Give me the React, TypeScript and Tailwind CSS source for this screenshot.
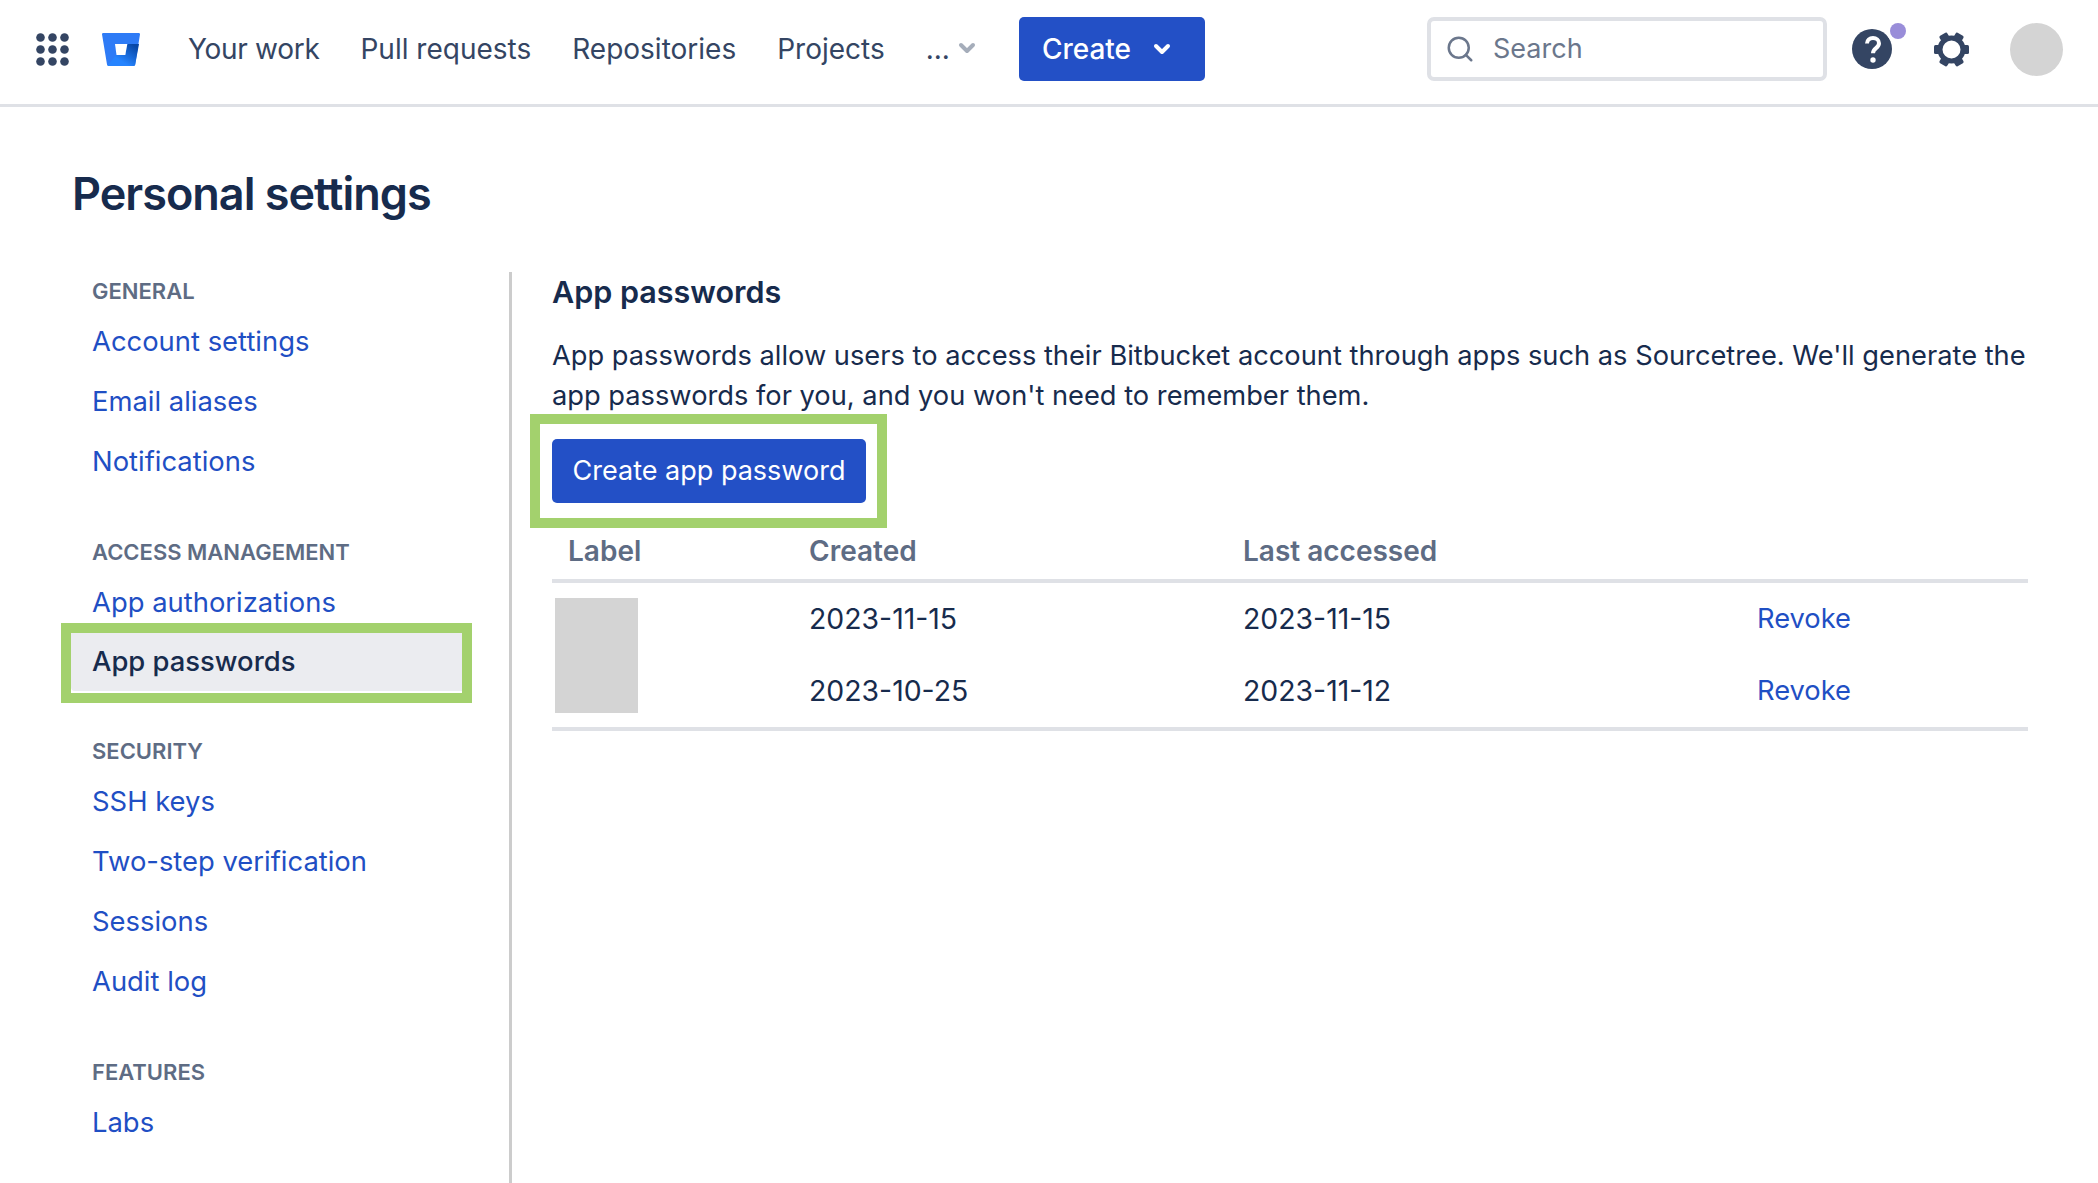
import React from "react";
import { ChevronDown, Search } from "lucide-react";

const sections = [
  { title: "GENERAL", links: ["Account settings", "Email aliases", "Notifications"] },
  { title: "ACCESS MANAGEMENT", links: ["App authorizations", "App passwords"] },
  { title: "SECURITY", links: ["SSH keys", "Two-step verification", "Sessions", "Audit log"] },
  { title: "FEATURES", links: ["Labs"] },
];

const GridIcon = () => (
  <svg width="33" height="33" viewBox="0 0 33 33" fill="#344563">
    {[4.5, 16.5, 28.5].map((y) => [4.5, 16.5, 28.5].map((x) => <circle key={`${x}-${y}`} cx={x} cy={y} r="4.300" />))}
  </svg>
);

const Logo = () => (
  <svg width="38" height="33" viewBox="0 0 38 33">
    <defs>
      <linearGradient id="bb" x1="1" y1="0.2" x2="0.45" y2="0.8">
        <stop offset="0" stopColor="#0747a6" />
        <stop offset="1" stopColor="#2684ff" />
      </linearGradient>
    </defs>
    <path d="M1.2 0h35.6c.8 0 1.3.6 1.2 1.3L33.200 31.600c-.1.8-.7 1.400-1.500 1.400H6.600c-.8 0-1.500-.6-1.600-1.400L0 1.300C-.1.6.4 0 1.200 0z" fill="#2e7bf6" />
    <path d="M37 11H25.300l-2 11h-8.800L5.500 32.500c.3.300.6.500 1.100.5h25.100c.8 0 1.400-.6 1.500-1.400z" fill="url(#bb)" />
    <path d="M13 11h12.300l-2 11h-8.800z" fill="#fff" />
  </svg>
);

const HelpIcon = () => (
  <svg width="58" height="58" viewBox="0 0 58 58">
    <circle cx="22" cy="29" r="20" fill="#344563" />
    <circle cx="48" cy="11" r="11.500" fill="#fff" />
    <circle cx="48" cy="11" r="8" fill="#998dd9" />
    <path d="M17 23.500c0-3.400 2.700-5.500 6-5.500s6 2.100 6 5.200c0 5-6 4.800-6 10" fill="none" stroke="#fff" strokeWidth="4" />
    <circle cx="23" cy="40" r="2.700" fill="#fff" />
  </svg>
);

const GearIcon = () => (
  <svg width="35" height="35" viewBox="0 0 35 35">
    <circle cx="17.500" cy="17.500" r="11.500" fill="none" stroke="#344563" strokeWidth="5" />
    {[0, 60, 120, 180, 240, 300].map((a) => (
      <rect key={a} x="13" y="0" width="9" height="7" rx="1.500" fill="#344563" transform={`rotate(${a + 30} 17.500 17.500)`} />
    ))}
  </svg>
);

const App = () => {
  return (
    <div className="h-[1183px] overflow-hidden bg-white font-['Inter',sans-serif] text-[27.25px] text-[#172b4d]">
      <header className="flex h-[107px] items-center border-b-[3px] border-[#dfe1e6] pb-[6px] pl-9 pr-[35px]">
        <GridIcon />
        <div className="ml-[33px] flex">
          <Logo />
        </div>
        <nav className="ml-[48px] flex items-center gap-[41px] text-[28px] text-[#344563]">
          <span className="tracking-[-0.3px]">Your work</span>
          <span>Pull requests</span>
          <span>Repositories</span>
          <span>Projects</span>
          <span className="flex items-center gap-[5px]">
            ...
            <ChevronDown size={24} strokeWidth={4} className="-mt-[2px] text-[#a5adba]" />
          </span>
        </nav>
        <button className="ml-[40px] flex h-[64px] w-[186px] items-center gap-[19px] rounded-[5px] bg-[#2350c6] pl-[23px] text-[28px] font-medium text-white">
          Create
          <ChevronDown size={24} strokeWidth={4} />
        </button>
        <div className="ml-auto flex h-[64px] w-[400px] items-center gap-[18px] rounded-[7px] border-[4px] border-[#dfe1e6] pl-[14px] text-[27px] text-[#6b778c]">
          <Search size={30} strokeWidth={2} />
          Search
        </div>
        <div className="ml-[23px] flex">
          <HelpIcon />
        </div>
        <div className="ml-[26px] flex">
          <GearIcon />
        </div>
        <div className="ml-[41px] h-[53px] w-[53px] rounded-full bg-[#d4d4d4]" />
      </header>

      <main className="pl-[72px] pr-[70px]">
        <h1 className="mt-[59px] text-[45px] leading-[56px] font-semibold tracking-[-1px]">Personal settings</h1>
        <div className="mt-[50px] flex">
          <aside className="h-[912px] w-[440px] shrink-0 border-r-[3px] border-[#cccccc] pt-[5px] text-[27.4px]">
            {sections.map((s) => (
              <div key={s.title} className="mb-[46px]">
                <div className="pl-[20px] text-[22px] leading-[28px] font-semibold text-[#5e6c84]">{s.title}</div>
                <ul className="mt-[7px]">
                  {s.links.map((l) =>
                    l === "App passwords" ? (
                      <li key={l} className="-mb-[12px] -ml-[11px] -mt-[10px] mr-[37px] h-[80px] border-[10px] border-[#a3d16d] pb-[2px]">
                        <div className="flex h-full items-center rounded-bl-[4px] bg-[#ebecf0] pl-[21px] font-medium">{l}</div>
                      </li>
                    ) : (
                      <li key={l} className="flex h-[60px] items-center pl-[20px] text-[#1f4fc4]">
                        {l}
                      </li>
                    )
                  )}
                </ul>
              </div>
            ))}
          </aside>

          <section className="min-w-0 flex-1 pl-[40px]">
            <h2 className="text-[30.5px] leading-[40px] font-semibold">App passwords</h2>
            <p className="-mr-[8px] mt-[24px] leading-[40px]">
              App passwords allow users to access their Bitbucket account through apps such as Sourcetree. We'll generate
              the app passwords for you, and you won't need to remember them.
            </p>
            <div className="-ml-[22px] -mt-[2px] w-[357px] border-[10px] border-[#a3d16d] px-[12px] py-[15px]">
              <button className="block h-[64px] w-[314px] rounded-[5px] bg-[#2350c6] text-[27px] text-white">Create app password</button>
            </div>
            <div className="grid grid-cols-[241px_434px_514px_1fr] text-[28px]">
              <div className="flex h-[55px] items-center border-b-[4px] border-[#dfe1e6] pb-[5px] pl-[16px] font-semibold text-[#5e6c84]">Label</div>
              <div className="flex h-[55px] items-center border-b-[4px] border-[#dfe1e6] pb-[5px] pl-[16px] font-semibold text-[#5e6c84]">Created</div>
              <div className="flex h-[55px] items-center border-b-[4px] border-[#dfe1e6] pb-[5px] pl-[16px] font-semibold text-[#5e6c84]">Last accessed</div>
              <div className="h-[55px] border-b-[4px] border-[#dfe1e6]" />
            </div>
            <div className="grid grid-cols-[241px_434px_514px_1fr] grid-rows-[72px_72px] items-center border-b-[4px] border-[#dfe1e6] text-[28.4px]">
              <div className="row-span-2 ml-[3px] h-[115px] w-[83px] bg-[#d4d4d4]" />
              <div className="pl-[16px]">2023-11-15</div>
              <div className="pl-[16px]">2023-11-15</div>
              <div className="pl-[16px] text-[27.3px] text-[#1f4fc4]">Revoke</div>
              <div className="pl-[16px]">2023-10-25</div>
              <div className="pl-[16px]">2023-11-12</div>
              <div className="pl-[16px] text-[27.3px] text-[#1f4fc4]">Revoke</div>
            </div>
          </section>
        </div>
      </main>
    </div>
  );
};

export default App;
